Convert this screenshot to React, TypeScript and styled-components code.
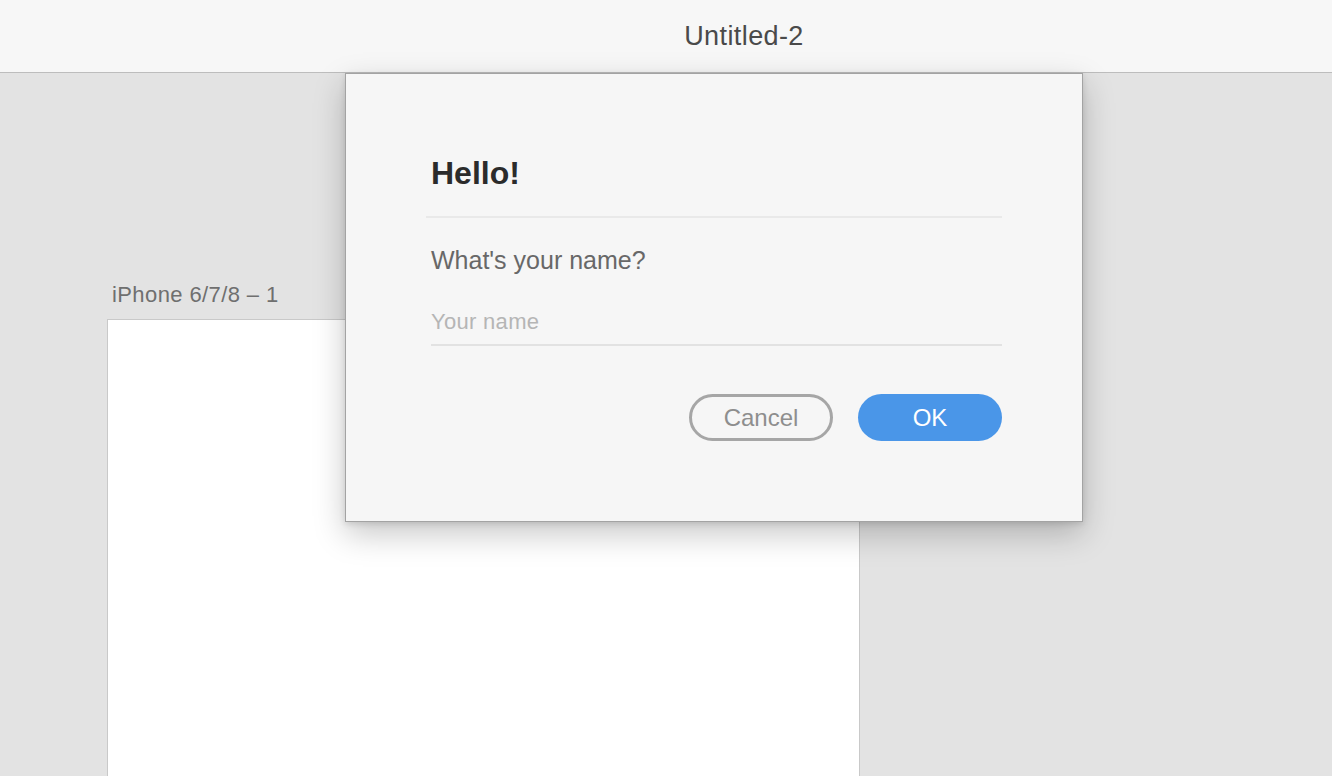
import * as React from "react";
import styled, { createGlobalStyle } from "styled-components";

const GlobalStyle = createGlobalStyle`
  html, body {
    margin: 0;
    padding: 0;
    height: 100%;
    overflow: hidden;
  }
  body {
    font-family: "Liberation Sans", Arial, sans-serif;
  }
  #root {
    height: 100%;
  }
`;

const App = () => {
  const [name, setName] = React.useState("");

  return (
    <Window>
      <GlobalStyle />
      <TitleBar>
        <Title>Untitled-2</Title>
      </TitleBar>

      <Canvas>
        <ArtboardLabel>iPhone 6/7/8 – 1</ArtboardLabel>
        <Artboard />
      </Canvas>

      <Dialog role="dialog">
        <Heading>Hello!</Heading>
        <Divider />
        <Question>What's your name?</Question>
        <NameInput
          placeholder="Your name"
          value={name}
          onChange={(e) => setName(e.target.value)}
        />
        <Actions>
          <PillButton variant="secondary">Cancel</PillButton>
          <PillButton variant="primary">OK</PillButton>
        </Actions>
      </Dialog>
    </Window>
  );
};

const Window = styled.div`
  position: relative;
  display: flex;
  flex-direction: column;
  height: 100%;
  width: 100%;
  background: #e3e3e3;
`;

const TitleBar = styled.header`
  flex: 0 0 auto;
  height: 72px;
  display: flex;
  align-items: center;
  justify-content: center;
  padding-left: 156px;
  background: #f7f7f7;
  border-bottom: 1px solid #bdbdbd;
`;

const Title = styled.div`
  font-size: 27px;
  letter-spacing: 0.4px;
  line-height: 70px;
  color: #4a4a4a;
`;

const Canvas = styled.main`
  flex: 1;
  display: flex;
  flex-direction: column;
  padding: 212px 0 0 107px;
  min-height: 0;
  background: #e3e3e3;
`;

const ArtboardLabel = styled.div`
  padding-left: 5px;
  font-size: 22px;
  letter-spacing: 0.4px;
  line-height: 20px;
  color: #6f6f6f;
`;

const Artboard = styled.div`
  flex: 1;
  width: 753px;
  margin-top: 14px;
  box-sizing: border-box;
  background: #ffffff;
  border: 1px solid #c9c9c9;
  border-bottom: none;
`;

const Dialog = styled.section`
  position: absolute;
  left: 345px;
  top: 73px;
  width: 738px;
  height: 449px;
  box-sizing: border-box;
  display: flex;
  flex-direction: column;
  padding: 83px 80px 0 85px;
  background: #f6f6f6;
  border: 1px solid #a3a3a3;
  box-shadow: 0 12px 30px rgba(0, 0, 0, 0.22), 0 2px 6px rgba(0, 0, 0, 0.12);
`;

const Heading = styled.h1`
  margin: 0;
  font-size: 32px;
  line-height: 32px;
  font-weight: 700;
  color: #2b2b2b;
`;

const Divider = styled.hr`
  margin: 27px 0 0 -5px;
  height: 2px;
  border: none;
  background: #e9e9e9;
`;

const Question = styled.p`
  margin: 30px 0 0;
  font-size: 25px;
  line-height: 24px;
  color: #686868;
`;

const NameInput = styled.input`
  margin-top: 37px;
  padding: 0 0 9px;
  font-family: "Liberation Sans", Arial, sans-serif;
  font-size: 22px;
  letter-spacing: 0.3px;
  line-height: 22px;
  color: #4a4a4a;
  background: transparent;
  border: none;
  border-bottom: 2px solid #e2e2e2;
  outline: none;

  &::placeholder {
    color: #b5b5b5;
  }
`;

const Actions = styled.div`
  display: flex;
  justify-content: flex-end;
  gap: 25px;
  margin-top: 48px;
`;

const PillButton = styled.button<{ variant: "primary" | "secondary" }>`
  width: 144px;
  height: 47px;
  box-sizing: border-box;
  border-radius: 24px;
  font-family: "Liberation Sans", Arial, sans-serif;
  font-size: 24px;
  cursor: pointer;
  border: ${(p) => (p.variant === "primary" ? "none" : "3px solid #a6a6a6")};
  background: ${(p) => (p.variant === "primary" ? "#4a96e8" : "transparent")};
  color: ${(p) => (p.variant === "primary" ? "#ffffff" : "#8e8e8e")};
`;

export default App;
